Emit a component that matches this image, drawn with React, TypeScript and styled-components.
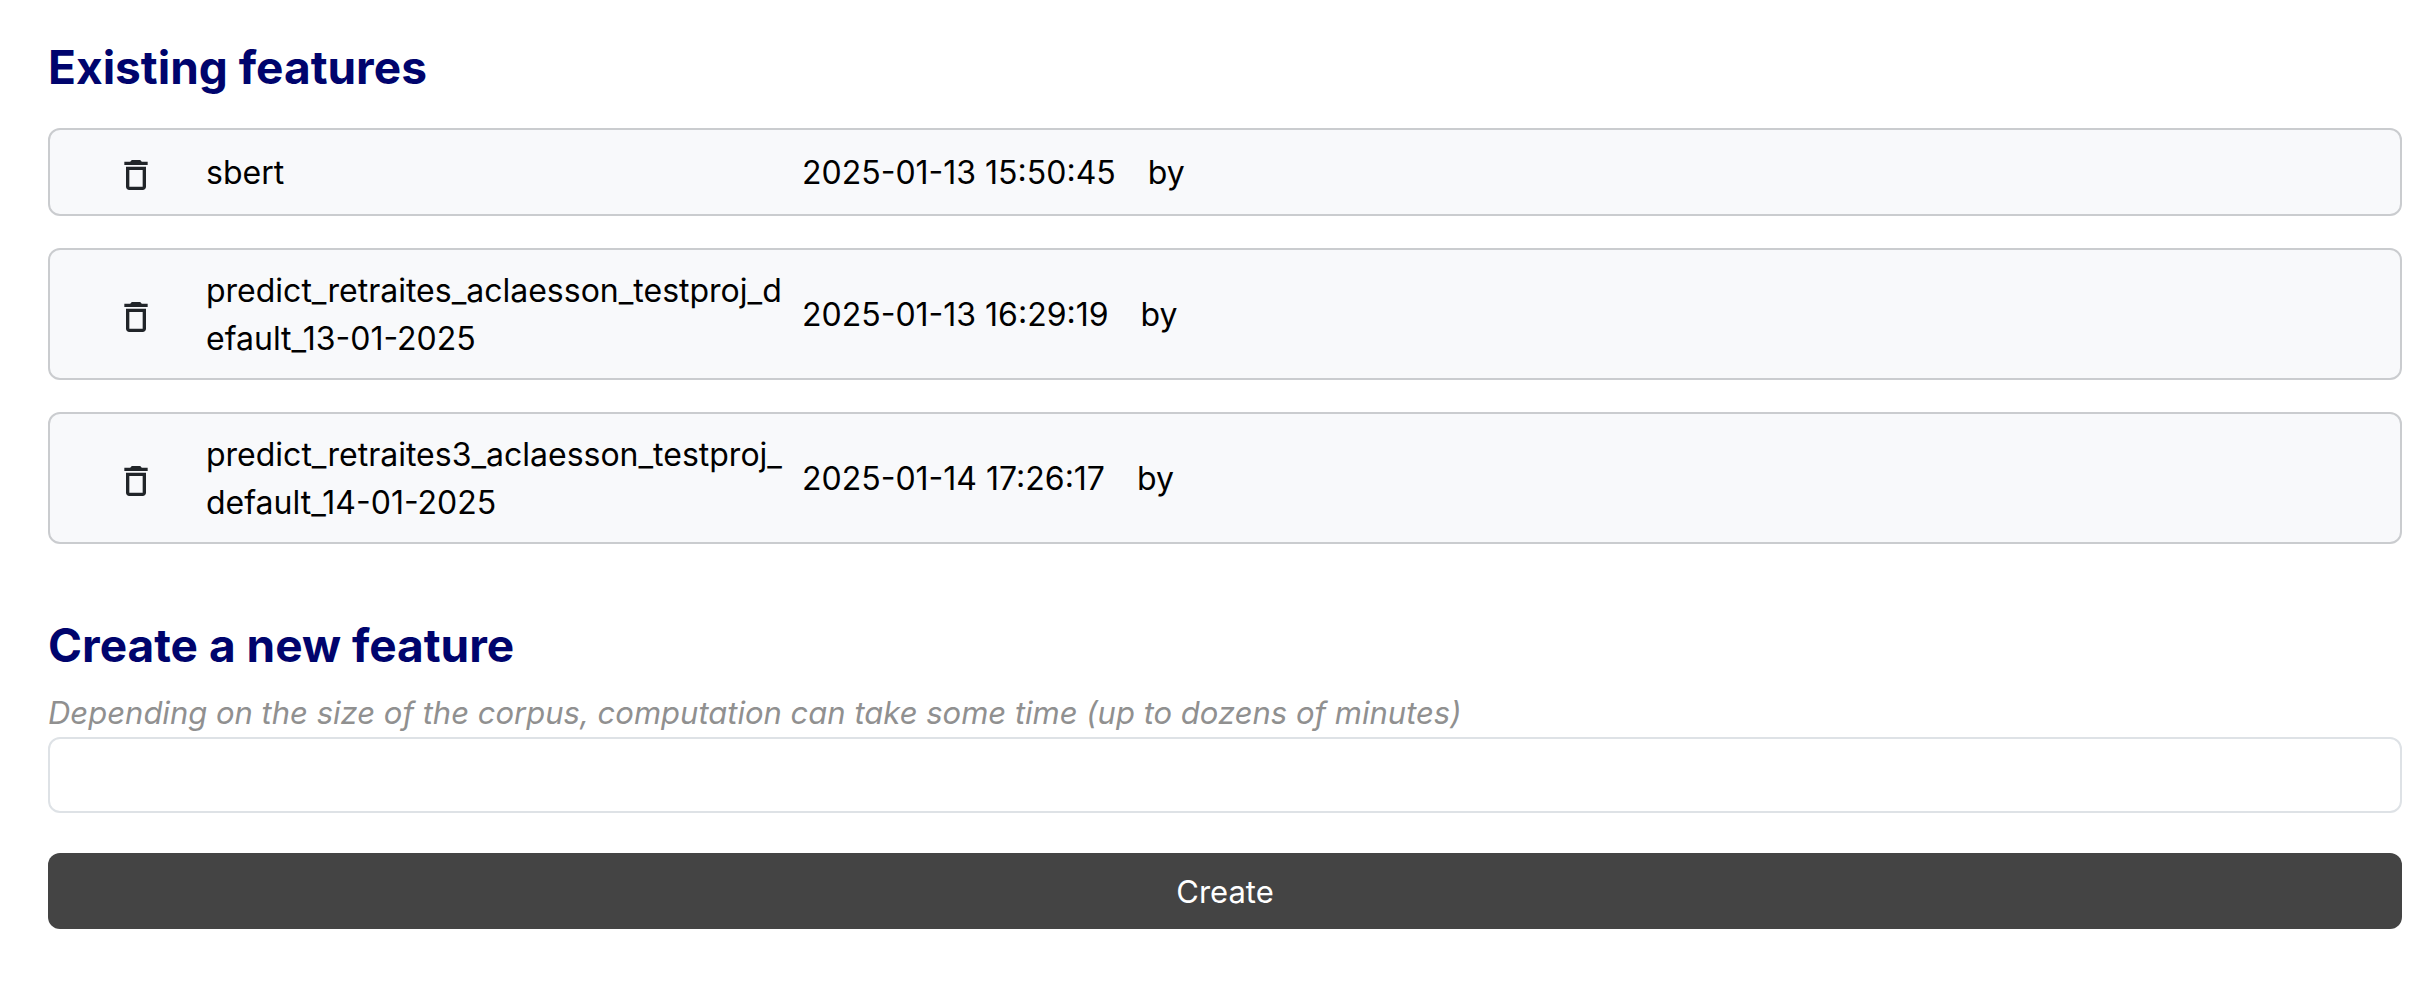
import React, { useState } from "react";
import styled, { createGlobalStyle } from "styled-components";
import { MdDeleteOutline } from "react-icons/md";

const GlobalStyle = createGlobalStyle`
  *, *::before, *::after {
    box-sizing: border-box;
  }

  body {
    margin: 0;
    background: #ffffff;
    color: #000000;
    font-family: Inter, "Liberation Sans", sans-serif;
    font-size: 32px;
    line-height: 48px;
  }
`;

const Page = styled.main`
  display: flex;
  flex-direction: column;
  gap: 72px;
  padding: 38px 28px 48px 48px;
`;

const Section = styled.section`
  display: flex;
  flex-direction: column;
`;

const Title = styled.h2`
  margin: 0;
  color: #00046d;
  font-size: 46px;
  font-weight: 700;
  line-height: 58px;
`;

const FeatureList = styled.ul`
  display: flex;
  flex-direction: column;
  gap: 32px;
  margin: 32px 0 0;
  padding: 0;
  list-style: none;
`;

const FeatureCard = styled.li`
  display: grid;
  grid-template-columns: 90px 596px 1fr;
  align-items: center;
  min-height: 88px;
  padding: 17px 24px 15px 66px;
  border: 2px solid #cacccf;
  border-radius: 12px;
  background: #f8f9fb;
`;

const DeleteButton = styled.button`
  display: flex;
  justify-self: start;
  padding: 4px 0 0;
  border: 0;
  background: none;
  color: #212529;
  font-size: 40px;
  cursor: pointer;
`;

const FeatureName = styled.span`
  padding-right: 20px;
  overflow-wrap: anywhere;
`;

const FeatureMeta = styled.span`
  display: flex;
  gap: 32px;
`;

const Form = styled.form`
  display: flex;
  flex-direction: column;
`;

const Hint = styled.label`
  margin-top: 15px;
  color: #909090;
  font-size: 31px;
  font-style: italic;
`;

const TextField = styled.input`
  width: 100%;
  height: 76px;
  padding: 12px 24px;
  border: 2px solid #dee2e6;
  border-radius: 12px;
  background: #ffffff;
  font: inherit;
`;

const SubmitButton = styled.button`
  margin-top: 40px;
  padding: 15px 24px 13px;
  border: 0;
  border-radius: 12px;
  background: #444444;
  color: #ffffff;
  font: inherit;
  font-size: 31px;
  cursor: pointer;
`;

interface Feature {
  name: string;
  time: string;
}

const features: Feature[] = [
  { name: "sbert", time: "2025-01-13 15:50:45" },
  {
    name: "predict_retraites_aclaesson_testproj_default_13-01-2025",
    time: "2025-01-13 16:29:19",
  },
  {
    name: "predict_retraites3_aclaesson_testproj_default_14-01-2025",
    time: "2025-01-14 17:26:17",
  },
];

export default function App() {
  const [value, setValue] = useState("");

  return (
    <>
      <GlobalStyle />
      <Page>
        <Section>
          <Title>Existing features</Title>
          <FeatureList>
            {features.map((feature) => (
              <FeatureCard key={feature.name}>
                <DeleteButton type="button" aria-label="Delete">
                  <MdDeleteOutline />
                </DeleteButton>
                <FeatureName>{feature.name}</FeatureName>
                <FeatureMeta>
                  <time>{feature.time}</time>
                  <span>by</span>
                </FeatureMeta>
              </FeatureCard>
            ))}
          </FeatureList>
        </Section>
        <Section>
          <Title>Create a new feature</Title>
          <Form onSubmit={(event) => event.preventDefault()}>
            <Hint htmlFor="feature">
              Depending on the size of the corpus, computation can take some
              time (up to dozens of minutes)
            </Hint>
            <TextField
              id="feature"
              type="text"
              value={value}
              onChange={(event) => setValue(event.target.value)}
            />
            <SubmitButton type="submit">Create</SubmitButton>
          </Form>
        </Section>
      </Page>
    </>
  );
}
